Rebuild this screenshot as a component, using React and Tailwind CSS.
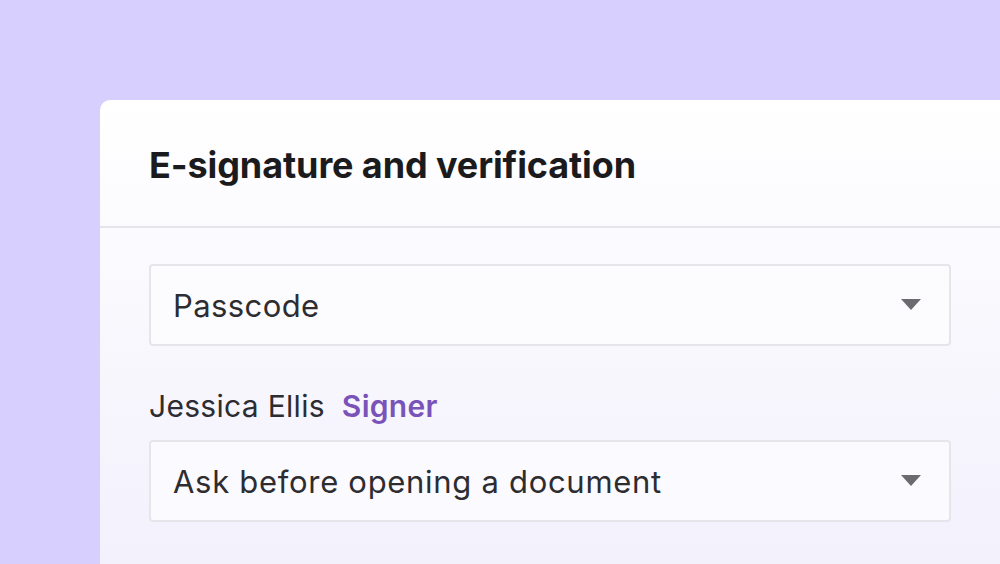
export default function App() {
  const Caret = () => (
    <svg width="20" height="12" viewBox="0 0 20 12" className="shrink-0">
      <path d="M0 0h20L10 11z" fill="#6b6b6f" />
    </svg>
  )

  return (
    <div
      className="w-[1000px] h-[564px] overflow-hidden bg-[#d7cffe] pt-[100px] pl-[100px]"
      style={{ fontFamily: "Inter, 'Noto Sans', sans-serif" }}
    >
      <div className="h-[520px] rounded-tl-[10px] bg-gradient-to-b from-white to-[#f1effc]">
        {/* Header */}
        <div className="h-[128px] border-b-2 border-[#e6e5ea] pl-[49px] pt-[43px]">
          <h1 className="text-[36px] leading-[44px] font-bold text-[#1b1b1d] tracking-[-0.1px]">
            E-signature and verification
          </h1>
        </div>

        <div className="pl-[49px] pr-[49px] pt-[36px]">
          <div className="h-[82px] flex items-center justify-between rounded-[4px] border-2 border-[#e6e5ea] bg-[#fcfcff] pl-[22px] pr-[28px]">
            <span className="pt-[3px] text-[31px] tracking-[0.4px] text-[#2d2d31]">Passcode</span>
            <Caret />
          </div>

          <div className="mt-[42px] flex items-baseline gap-[17px] text-[30px] leading-[36px] tracking-[0.3px]">
            <span className="text-[#2d2d31]">Jessica Ellis</span>
            <span className="font-semibold text-[#7953b8]">Signer</span>
          </div>

          <div className="mt-[16px] h-[82px] flex items-center justify-between rounded-[4px] border-2 border-[#e6e5ea] bg-[#fbfaff] pl-[22px] pr-[28px]">
            <span className="pt-[3px] text-[31px] tracking-[0.7px] text-[#2d2d31]">Ask before opening a document</span>
            <Caret />
          </div>
        </div>
      </div>
    </div>
  )
}
